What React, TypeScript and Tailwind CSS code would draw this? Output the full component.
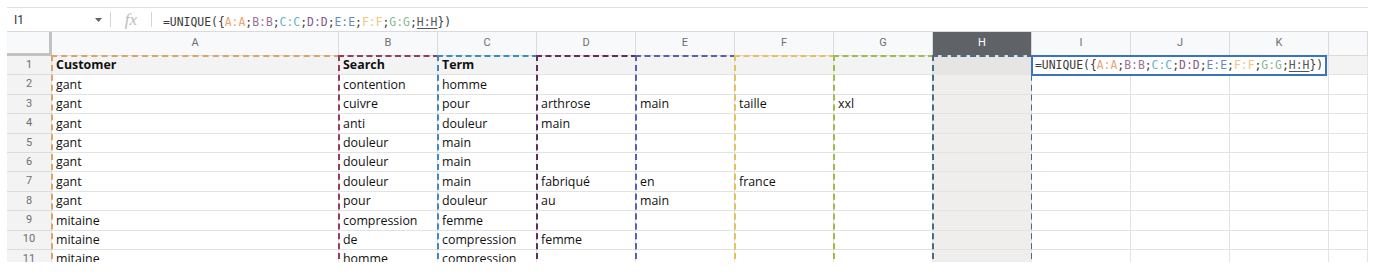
import React from "react";

type Col = { letter: string; width: string; dash?: string; shade?: boolean };

const COLS: Col[] = [
  { letter: "A", width: "w-[287px]", dash: "border-[#dba56a]" },
  { letter: "B", width: "w-[99px]", dash: "border-[#913d63]" },
  { letter: "C", width: "w-[99px]", dash: "border-[#3a8dc1]" },
  { letter: "D", width: "w-[99px]", dash: "border-[#612d5f]" },
  { letter: "E", width: "w-[99px]", dash: "border-[#5a5fae]" },
  { letter: "F", width: "w-[99px]", dash: "border-[#e4c35c]" },
  { letter: "G", width: "w-[99px]", dash: "border-[#9fbb4b]" },
  { letter: "H", width: "w-[99px]", dash: "border-[#4b6a86]", shade: true },
  { letter: "I", width: "w-[99px]" },
  { letter: "J", width: "w-[99px]" },
  { letter: "K", width: "w-[99px]" },
  { letter: "", width: "w-[39px]" },
];

const ROWS: string[][] = [
  ["Customer", "Search", "Term"],
  ["gant", "contention", "homme"],
  ["gant", "cuivre", "pour", "arthrose", "main", "taille", "xxl"],
  ["gant", "anti", "douleur", "main"],
  ["gant", "douleur", "main"],
  ["gant", "douleur", "main"],
  ["gant", "douleur", "main", "fabriqué", "en", "france"],
  ["gant", "pour", "douleur", "au", "main"],
  ["mitaine", "compression", "femme"],
  ["mitaine", "de", "compression", "femme"],
  ["mitaine", "homme", "compression"],
];

const REFS = [
  { text: "A:A", color: "text-[#eea36c]" },
  { text: "B:B", color: "text-[#9a7196]" },
  { text: "C:C", color: "text-[#5ab6c5]" },
  { text: "D:D", color: "text-[#86598a]" },
  { text: "E:E", color: "text-[#6889bd]" },
  { text: "F:F", color: "text-[#f2c57c]" },
  { text: "G:G", color: "text-[#86b891]" },
];

function Formula() {
  return (
    <span className="whitespace-nowrap font-['DejaVu_Sans_Mono',monospace] text-[11.4px] text-[#3a3a3a]">
      =UNIQUE({"{"}
      {REFS.map((r) => (
        <React.Fragment key={r.text}>
          <span className={r.color}>{r.text}</span>;
        </React.Fragment>
      ))}
      <span className="underline underline-offset-2 text-[#555]">H:H</span>
      {"})"}
    </span>
  );
}

function FormulaBar() {
  return (
    <div className="flex h-[24px] items-center border-t border-[#e1e1e1] bg-white">
      <div className="flex w-[103px] items-center justify-between pl-[7px] pr-[8px] font-['Roboto',sans-serif] text-[12px] text-[#333]">
        <span>I1</span>
        <svg width="7" height="4" viewBox="0 0 7 4">
          <path d="M0 0h7L3.5 4z" fill="#5f6368" />
        </svg>
      </div>
      <div className="h-[15px] w-px bg-[#d4d4d4]" />
      <div className="flex w-[40px] justify-center">
        <span className="font-['Liberation_Serif',serif] text-[17px] italic leading-none text-[#bcbcbc]">fx</span>
      </div>
      <div className="h-[15px] w-px bg-[#d4d4d4]" />
      <div className="pl-[11px]">
        <Formula />
      </div>
    </div>
  );
}

function RowHeader() {
  return (
    <div className="flex w-[45px] shrink-0 flex-col font-['Roboto',sans-serif] text-[11px] text-[#6f6f6f]">
      <div className="h-[24px] shrink-0 border-r-[3px] border-b-[3px] border-[#c2c2c2] bg-[#f8f9fa]" />
      {ROWS.map((_, i) => (
        <div
          key={i}
          className="flex h-[19.4px] shrink-0 items-center justify-center border-r border-b border-[#dcdcdc] bg-[#f3f3f3]"
        >
          {i + 1}
        </div>
      ))}
    </div>
  );
}

function Column({ col, index }: { col: Col; index: number }) {
  const isEditCol = col.letter === "I";
  return (
    <div className={`${col.width} flex shrink-0 flex-col`}>
      <div
        className={`flex h-[24px] shrink-0 items-center justify-center border-r border-b border-[#dadada] font-['Roboto',sans-serif] text-[11px] ${
          col.shade ? "bg-[#5f6368] text-white" : "bg-[#f8f9fa] text-[#6f6f6f]"
        }`}
      >
        {col.letter}
      </div>
      <div className="relative shrink-0">
        {ROWS.map((r, i) => {
          const bg = col.shade
            ? i === 0
              ? "bg-[#e7e5e4]"
              : "bg-[#f0eeed]"
            : i === 0
              ? "bg-[#f3f3f3]"
              : "bg-white";
          return (
            <div
              key={i}
              className={`flex h-[19.4px] items-center whitespace-nowrap border-r border-b border-[#e2e3e3] pl-[4px] pt-px font-['Open_Sans',sans-serif] text-[12.4px] text-[#111] ${bg} ${
                i === 0 ? "font-bold" : ""
              } ${isEditCol && i === 0 ? "relative" : "overflow-hidden"}`}
            >
              {r[index] ?? ""}
              {isEditCol && i === 0 && (
                <div className="absolute -left-px -top-px z-20 flex h-[21px] w-[296px] items-center border-2 border-[#3c73c0] bg-white pl-[2px] font-normal">
                  <Formula />
                </div>
              )}
            </div>
          );
        })}
        {col.dash && (
          <div
            className={`pointer-events-none absolute -left-px -right-px -top-px bottom-0 border-2 border-b-0 border-dashed ${col.dash}`}
          />
        )}
      </div>
    </div>
  );
}

export default function App() {
  return (
    <div className="h-[273px] w-[1385px] overflow-hidden bg-white pt-[7px]">
      <div className="ml-[7px] w-[1361px]">
        <FormulaBar />
        <div className="flex h-[231px] overflow-hidden border-t border-[#dadada]">
          <RowHeader />
          {COLS.map((c, i) => (
            <Column key={i} col={c} index={i} />
          ))}
        </div>
      </div>
    </div>
  );
}
